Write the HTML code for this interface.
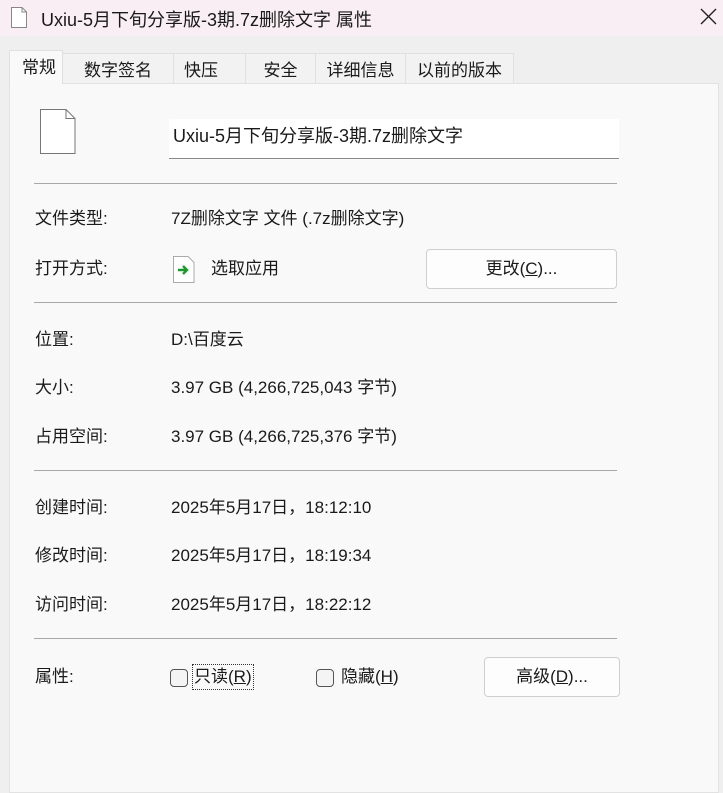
<!DOCTYPE html><html><head><meta charset="utf-8"><style>
body{margin:0;width:723px;height:786px;background:#efefef;font-family:"Liberation Sans","Noto Sans CJK SC",sans-serif;color:#1a1a1a;position:relative;overflow:hidden;font-size:17px}
.a{position:absolute;white-space:nowrap}
.title{left:0;top:0;width:723px;height:36px;background:#f8eef3}
.tab{position:absolute;top:53px;height:30px;background:#f2f2f2;border:1px solid #e0e0e0;border-bottom:none;line-height:34px;text-align:center;font-size:17px;box-sizing:border-box}
.panel{left:9px;top:83px;width:710px;height:710px;background:#f9f9f9;border:1px solid #e2e2e2;box-sizing:border-box}
.hr{position:absolute;left:34px;width:583px;height:1px;background:#a8a8a8}
.btn{position:absolute;background:#fdfdfd;border:1px solid #cfcfcf;border-radius:4px;box-sizing:border-box;text-align:center;font-size:17px}
.cb{position:absolute;width:18px;height:18px;border:1px solid #555;border-radius:4px;background:#f4f4f4;box-sizing:border-box}
</style></head><body>
<div class="a title"></div>
<svg class="a" style="left:11px;top:7px" width="16" height="21"><path d="M0.5 0.5H11L15.5 5V20.5H0.5Z" fill="#fff" stroke="#888"/><path d="M11 0.5V5H15.5" fill="none" stroke="#888"/></svg>
<div class="a" style="left:41px;top:6px;font-size:18px">Uxiu-5月下旬分享版-3期.7z删除文字 属性</div>
<svg class="a" style="left:700px;top:8px" width="17" height="17"><path d="M1 1L16 16M16 1L1 16" stroke="#222" stroke-width="1.4"/></svg>
<div class="a panel"></div>
<div class="tab" style="left:9px;top:50px;width:54px;height:34px;background:#f9f9f9;line-height:34px;text-align:left;padding-left:12px">常规</div>
<div class="tab" style="left:62px;width:112px;line-height:34px">数字签名</div>
<div class="tab" style="left:173px;width:73px;text-align:left;padding-left:10px;line-height:34px">快压</div>
<div class="tab" style="left:245px;width:71px;line-height:34px">安全</div>
<div class="tab" style="left:315px;width:91px;line-height:34px">详细信息</div>
<div class="tab" style="left:405px;width:109px;line-height:34px">以前的版本</div>
<svg class="a" style="left:40px;top:109px" width="36" height="45"><path d="M0.5 0.5H26L35 9.5V44.5H0.5Z" fill="#fff" stroke="#777"/><path d="M26 0.5V9.5H35" fill="none" stroke="#777"/></svg>
<div class="a" style="left:169px;top:119px;width:450px;height:40px;background:#fff;border-bottom:1px solid #888;box-sizing:border-box;padding:3px 4px;font-size:18px">Uxiu-5月下旬分享版-3期.7z删除文字</div>
<div class="hr" style="top:183px"></div>
<div class="a" style="left:35px;top:204px">文件类型:</div><div class="a" style="left:171px;top:204px">7Z删除文字 文件 (.7z删除文字)</div>
<div class="a" style="left:35px;top:254px">打开方式:</div>
<svg class="a" style="left:173px;top:256px" width="22" height="27"><path d="M0.5 0.5H15L21 6.5V26.5H0.5Z" fill="#fff" stroke="#aaa"/><path d="M5 14H14M10 10L14 14L10 18" fill="none" stroke="#1a9a2a" stroke-width="2.4"/></svg>
<div class="a" style="left:211px;top:254px">选取应用</div>
<div class="btn" style="left:426px;top:249px;width:191px;height:40px;line-height:38px">更改(<u>C</u>)...</div>
<div class="hr" style="top:302px"></div>
<div class="a" style="left:35px;top:325px">位置:</div><div class="a" style="left:171px;top:325px">D:\百度云</div>
<div class="a" style="left:35px;top:373px">大小:</div><div class="a" style="left:171px;top:373px">3.97 GB (4,266,725,043 字节)</div>
<div class="a" style="left:35px;top:422px">占用空间:</div><div class="a" style="left:171px;top:422px">3.97 GB (4,266,725,376 字节)</div>
<div class="hr" style="top:470px"></div>
<div class="a" style="left:35px;top:493px">创建时间:</div><div class="a" style="left:171px;top:493px">2025年5月17日，18:12:10</div>
<div class="a" style="left:35px;top:541px">修改时间:</div><div class="a" style="left:171px;top:541px">2025年5月17日，18:19:34</div>
<div class="a" style="left:35px;top:590px">访问时间:</div><div class="a" style="left:171px;top:590px">2025年5月17日，18:22:12</div>
<div class="hr" style="top:638px"></div>
<div class="a" style="left:35px;top:662px">属性:</div>
<div class="cb" style="left:170px;top:669px"></div>
<div class="a" style="left:193px;top:665px;outline:1px dotted #333;padding:0 1px;line-height:24px">只读(<u>R</u>)</div>
<div class="cb" style="left:316px;top:669px"></div>
<div class="a" style="left:341px;top:665px;line-height:24px">隐藏(<u>H</u>)</div>
<div class="btn" style="left:484px;top:657px;width:136px;height:40px;line-height:38px">高级(<u>D</u>)...</div>
</body></html>
